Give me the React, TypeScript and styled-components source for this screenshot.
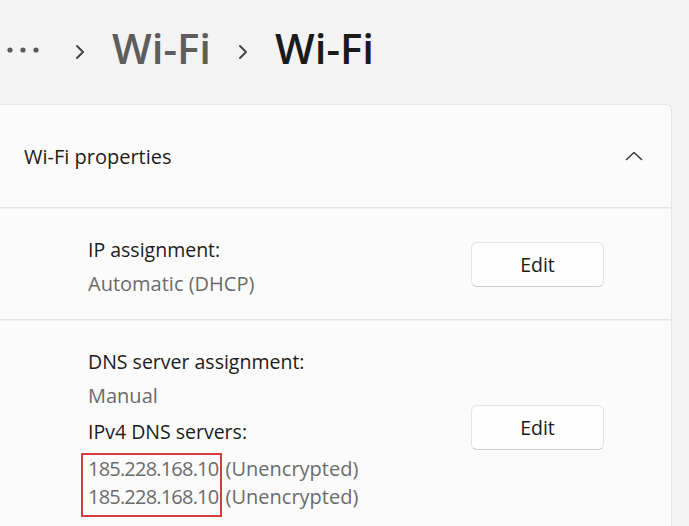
import React from "react";
import styled, { createGlobalStyle } from "styled-components";

const GlobalStyle = createGlobalStyle`
  html, body {
    margin: 0;
    padding: 0;
    background: #f3f3f3;
  }
  body {
    font-family: "Open Sans", "Noto Sans", sans-serif;
    color: #1b1b1b;
    overflow: hidden;
  }
`;

const Page = styled.div`
  width: 689px;
  height: 526px;
  overflow: hidden;
`;

const Breadcrumb = styled.nav`
  display: flex;
  align-items: center;
  height: 104px;
  padding-left: 7px;
  box-sizing: border-box;
`;

const Crumb = styled.span<{ $current?: boolean }>`
  font-size: 42px;
  font-weight: 600;
  line-height: 1;
  color: ${({ $current }) => ($current ? "#1a1a1a" : "#5d5d5d")};
  margin-top: -8px;
`;

const Separator = styled.svg`
  width: 10px;
  height: 16px;
  margin: 0 27px;
  flex-shrink: 0;
`;

const Dots = styled.svg`
  width: 33px;
  height: 8px;
  margin-right: 8px;
  margin-top: -4px;
`;

const Card = styled.section`
  width: 672px;
  background: #fbfbfb;
  border: 1px solid #e5e5e5;
  border-left: none;
  border-radius: 0 6px 0 0;
  box-sizing: border-box;
`;

const CardHeader = styled.div`
  display: flex;
  align-items: center;
  justify-content: space-between;
  height: 102px;
  padding: 0 28px 0 24px;
  font-size: 20px;
`;

const Row = styled.div<{ $top: number; $bottom: number }>`
  display: flex;
  align-items: center;
  justify-content: space-between;
  padding: ${({ $top, $bottom }) => `${$top}px 67px ${$bottom}px 88px`};
  border-top: 1px solid #e2e2e2;
  box-shadow: inset 0 1px 0 #efefef;
`;

const Details = styled.div`
  display: flex;
  flex-direction: column;
  gap: 8px;
`;

const Field = styled.div`
  display: flex;
  flex-direction: column;
  gap: 6px;
`;

const Label = styled.div`
  font-size: 19.5px;
  line-height: 28px;
  color: #1b1b1b;
`;

const Value = styled.div`
  font-size: 20px;
  line-height: 28px;
  color: #6b6b6b;
`;

const Address = styled.span`
  letter-spacing: -0.8px;
  margin-right: 2px;
`;

const ServerList = styled.div`
  position: relative;
  display: flex;
  flex-direction: column;
  margin-top: 3px;
`;

const Highlight = styled.div`
  position: absolute;
  left: -7px;
  top: -2px;
  width: 141px;
  height: 64px;
  border: 2px solid #d23c3c;
  box-sizing: border-box;
  pointer-events: none;
`;

const Button = styled.button`
  width: 133px;
  height: 45px;
  margin-bottom: 5px;
  background: #fefefe;
  border: 1px solid #e3e3e3;
  border-bottom-color: #cdcdcd;
  border-radius: 6px;
  font-family: inherit;
  font-size: 19.5px;
  color: #1b1b1b;
  flex-shrink: 0;
`;

const Chevron = () => (
  <Separator viewBox="0 0 10 16">
    <path d="M2 2l6 6-6 6" fill="none" stroke="#454545" strokeWidth="2" strokeLinecap="round" strokeLinejoin="round" />
  </Separator>
);

const ChevronUp = () => (
  <svg width="18" height="10" viewBox="0 0 18 10">
    <path d="M1.5 8.5L9 1.5l7.5 7" fill="none" stroke="#3d3d3d" strokeWidth="1.6" strokeLinecap="round" strokeLinejoin="round" />
  </svg>
);

const servers = ["185.228.168.10", "185.228.168.10"];

export default function App() {
  return (
    <Page>
      <GlobalStyle />
      <Breadcrumb>
        <Dots viewBox="0 0 33 8">
          <circle cx="3" cy="4" r="2.6" fill="#5a5a5a" />
          <circle cx="16" cy="4" r="2.6" fill="#5a5a5a" />
          <circle cx="29" cy="4" r="2.6" fill="#5a5a5a" />
        </Dots>
        <Chevron />
        <Crumb>Wi-Fi</Crumb>
        <Chevron />
        <Crumb $current>Wi-Fi</Crumb>
      </Breadcrumb>

      <Card>
        <CardHeader>
          <span>Wi-Fi properties</span>
          <ChevronUp />
        </CardHeader>

        <Row $top={28} $bottom={21}>
          <Field>
            <Label>IP assignment:</Label>
            <Value>Automatic (DHCP)</Value>
          </Field>
          <Button>Edit</Button>
        </Row>

        <Row $top={28} $bottom={20}>
          <Details>
            <Field>
              <Label>DNS server assignment:</Label>
              <Value>Manual</Value>
            </Field>
            <Field>
              <Label>IPv4 DNS servers:</Label>
              <ServerList>
                {servers.map((ip, i) => (
                  <Value key={i}>
                    <Address>{ip}</Address> (Unencrypted)
                  </Value>
                ))}
                <Highlight />
              </ServerList>
            </Field>
          </Details>
          <Button>Edit</Button>
        </Row>
      </Card>
    </Page>
  );
}
